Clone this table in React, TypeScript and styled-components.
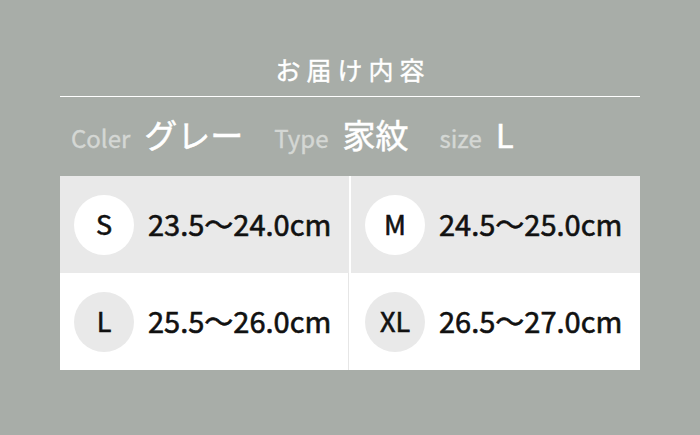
import React from "react";
import styled, { createGlobalStyle } from "styled-components";

const GlobalStyle = createGlobalStyle`
  html, body {
    margin: 0;
    padding: 0;
    background: #a8ada8;
  }
  body {
    font-family: "Noto Sans CJK JP", "Noto Sans", sans-serif;
  }
`;

const Page = styled.div`
  width: 700px;
  height: 435px;
  box-sizing: border-box;
  padding: 52px 60px 0 60px;
  background: #a8ada8;
`;

const Title = styled.h1`
  margin: 0;
  padding-bottom: 10px;
  border-bottom: 1px solid #ffffff;
  text-align: center;
  color: #ffffff;
  font-size: 25px;
  font-weight: 400;
  -webkit-text-stroke: 0.4px #ffffff;
  line-height: 34px;
  letter-spacing: 6px;
  text-indent: 6px;
`;

const Spec = styled.div`
  display: flex;
  align-items: baseline;
  padding: 13px 0 0 11px;
  height: 66px;
  box-sizing: border-box;
`;

const Label = styled.span`
  color: #d4d7d4;
  font-size: 24px;
  font-weight: 400;
  -webkit-text-stroke: 0.4px #d4d7d4;
  margin-right: 14px;
`;

const Value = styled.span`
  color: #ffffff;
  font-size: 33px;
  font-weight: 400;
  -webkit-text-stroke: 0.5px #ffffff;
  margin-right: 31px;
`;

const Table = styled.div`
  display: grid;
  grid-template-columns: 289px 289px;
  grid-auto-rows: 97px;
  column-gap: 2px;
  width: 580px;
  margin-top: 13px;
  background: #ffffff;
`;

const Cell = styled.div<{ $shaded?: boolean; $rule?: boolean }>`
  display: flex;
  align-items: center;
  gap: 14px;
  padding-left: 14px;
  background: ${(p) => (p.$shaded ? "#e9e9e9" : "#ffffff")};
  border-right: ${(p) => (p.$rule ? "1px solid #e6e6e6" : "0")};
`;

const Badge = styled.div<{ $shaded?: boolean }>`
  flex: none;
  width: 60px;
  height: 60px;
  box-sizing: border-box;
  padding-bottom: 3px;
  border-radius: 50%;
  display: flex;
  align-items: center;
  justify-content: center;
  background: ${(p) => (p.$shaded ? "#e9e9e9" : "#ffffff")};
  color: #111111;
  font-size: 27px;
  font-weight: 400;
  -webkit-text-stroke: 0.6px #111111;
`;

const Range = styled.span`
  padding-bottom: 4px;
  color: #111111;
  font-size: 29px;
  font-weight: 400;
  -webkit-text-stroke: 0.6px #111111;
`;

const sizes = [
  { size: "S", range: "23.5～24.0cm" },
  { size: "M", range: "24.5～25.0cm" },
  { size: "L", range: "25.5～26.0cm" },
  { size: "XL", range: "26.5～27.0cm" },
];

export default function App() {
  return (
    <>
      <GlobalStyle />
      <Page>
        <Title>お届け内容</Title>
        <Spec>
          <Label>Coler</Label>
          <Value>グレー</Value>
          <Label>Type</Label>
          <Value>家紋</Value>
          <Label>size</Label>
          <Value>L</Value>
        </Spec>
        <Table>
          {sizes.map((item, i) => {
            const top = i < 2;
            return (
              <Cell key={item.size} $shaded={top} $rule={i === 2}>
                <Badge $shaded={!top}>{item.size}</Badge>
                <Range>{item.range}</Range>
              </Cell>
            );
          })}
        </Table>
      </Page>
    </>
  );
}
